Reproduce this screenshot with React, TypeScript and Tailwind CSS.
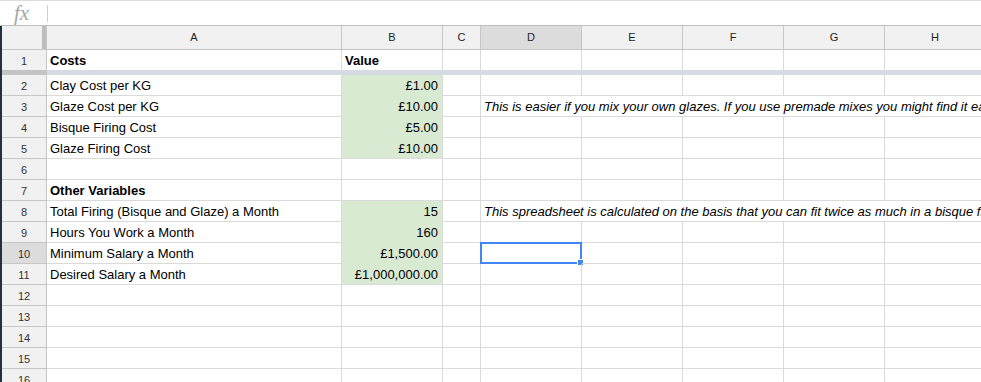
const cols = [
  { l: "A", w: "w-[295px]" },
  { l: "B", w: "w-[101px]" },
  { l: "C", w: "w-[38px]" },
  { l: "D", w: "w-[101px]" },
  { l: "E", w: "w-[101px]" },
  { l: "F", w: "w-[101px]" },
  { l: "G", w: "w-[101px]" },
  { l: "H", w: "w-[101px]" },
];

type RowData = { a?: string; b?: string; d?: string; bold?: boolean; green?: boolean; lastGreen?: boolean };

const rows: Record<number, RowData> = {
  2: { a: "Clay Cost per KG", b: "£1.00", green: true },
  3: {
    a: "Glaze Cost per KG",
    b: "£10.00",
    green: true,
    d: "This is easier if you mix your own glazes. If you use premade mixes you might find it easier to work out the cost per batch",
  },
  4: { a: "Bisque Firing Cost", b: "£5.00", green: true },
  5: { a: "Glaze Firing Cost", b: "£10.00", green: true, lastGreen: true },
  6: {},
  7: { a: "Other Variables", bold: true },
  8: {
    a: "Total Firing (Bisque and Glaze) a Month",
    b: "15",
    green: true,
    d: "This spreadsheet is calculated on the basis that you can fit twice as much in a bisque firing as a glaze firing",
  },
  9: { a: "Hours You Work a Month", b: "160", green: true },
  10: { a: "Minimum Salary a Month", b: "£1,500.00", green: true },
  11: { a: "Desired Salary a Month", b: "£1,000,000.00", green: true, lastGreen: true },
};

function RowHeader({ n, selected, last }: { n: number; selected?: boolean; last?: boolean }) {
  return (
    <div
      className={`w-[45px] shrink-0 border-r border-[#c6c6c6] pt-[1px] text-center text-[11px] leading-[20px] text-[#333] ${
        last ? "" : "border-b"
      } ${selected ? "bg-[#dcdcdc]" : "bg-[#f1f1f1]"}`}
    >
      {n}
    </div>
  );
}

function GridRow({ n }: { n: number }) {
  const r = rows[n] ?? {};
  return (
    <div className="flex h-[21px]">
      <RowHeader n={n} selected={n === 10} />
      {cols.map((c, i) => {
        if (i > 3 && r.d) return null;
        if (i === 3 && r.d) {
          return (
            <div
              key={c.l}
              className="w-[505px] shrink-0 overflow-hidden whitespace-nowrap border-b border-[#dadada] px-[3px] pt-[2px] text-[13px] italic leading-[18px] text-black"
            >
              {r.d}
            </div>
          );
        }
        if (i === 1) {
          return (
            <div
              key={c.l}
              className={`${c.w} shrink-0 overflow-hidden whitespace-nowrap border-r border-b border-r-[#dadada] px-[4px] pt-[2px] text-right text-[13px] leading-[18px] text-black ${
                r.green ? "bg-[#d9ead3]" : ""
              } ${r.green && !r.lastGreen ? "border-b-[#d9ead3]" : "border-b-[#dadada]"}`}
            >
              {r.b}
            </div>
          );
        }
        return (
          <div
            key={c.l}
            className={`relative ${c.w} shrink-0 whitespace-nowrap border-r border-b border-[#dadada] px-[3px] pt-[2px] text-[13px] leading-[18px] text-black ${
              r.bold ? "font-bold" : ""
            }`}
          >
            {i === 0 ? r.a : null}
            {n === 10 && i === 3 ? (
              <div className="absolute -left-[1px] -top-[1px] h-[22px] w-[102px] border-2 border-[#4285f4]">
                <div className="absolute -bottom-[4px] -right-[4px] h-[7px] w-[7px] border border-white bg-[#4285f4]" />
              </div>
            ) : null}
          </div>
        );
      })}
    </div>
  );
}

export default function App() {
  return (
    <div className="h-[382px] w-[981px] overflow-hidden bg-white font-['Liberation_Sans',Arial,sans-serif]">
      {/* formula bar */}
      <div className="flex h-[26px] items-center border-t border-b border-t-[#dcdcdc] border-b-[#bdbdbd]">
        <div className="w-[47px] pl-[14px] font-['Liberation_Serif',serif] text-[21px] italic leading-none text-[#a6a6a6]">
          fx
        </div>
        <div className="h-[17px] w-px bg-[#cfcfcf]" />
      </div>

      <div className="border-l-2 border-[#22313f]">
        {/* column headers */}
        <div className="flex h-[24px] border-b border-[#c6c6c6] bg-[#f1f1f1]">
          <div className="flex w-[45px] shrink-0 justify-end border-r border-[#c6c6c6]">
            <div className="w-[4px] bg-[#bdbdbd]" />
          </div>
          {cols.map((c) => (
            <div
              key={c.l}
              className={`${c.w} shrink-0 border-r border-[#c6c6c6] text-center text-[11px] leading-[23px] text-[#222] ${
                c.l === "D" ? "bg-[#dcdcdc]" : ""
              }`}
            >
              {c.l}
            </div>
          ))}
        </div>

        {/* row 1 (frozen) */}
        <div className="flex h-[20px]">
          <RowHeader n={1} last />
          {cols.map((c, i) => (
            <div
              key={c.l}
              className={`${c.w} shrink-0 border-r border-[#dadada] px-[3px] pt-[1px] text-[13px] font-bold leading-[19px] text-black`}
            >
              {i === 0 ? "Costs" : i === 1 ? "Value" : null}
            </div>
          ))}
        </div>

        {/* freeze divider */}
        <div className="flex h-[5px]">
          <div className="w-[45px] shrink-0 bg-[#c4c4c4]" />
          <div className="flex-1 bg-[#d6dae2]" />
        </div>

        {Array.from({ length: 15 }, (_, k) => k + 2).map((n) => (
          <GridRow key={n} n={n} />
        ))}
      </div>
    </div>
  );
}
